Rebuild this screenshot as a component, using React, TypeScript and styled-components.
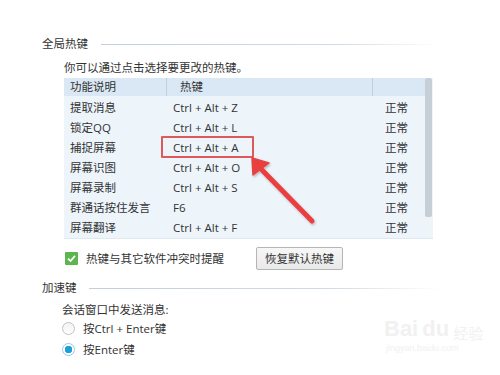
import React from "react";
import styled, { createGlobalStyle } from "styled-components";

const Global = createGlobalStyle`
  html, body { margin: 0; padding: 0; background: #fff; }
  body { font-family: "Open Sans", "Noto Sans CJK SC", sans-serif; color: #333; }
`;

const Page = styled.div`
  width: 500px;
  height: 375px;
  box-sizing: border-box;
  padding: 35px 0 0 42px;
  position: relative;
  overflow: hidden;
  font-size: 11.5px;
`;

const SectionHead = styled.div<{ $gap: number; $mt?: number }>`
  display: flex;
  align-items: center;
  gap: ${(p) => p.$gap}px;
  width: 398px;
  height: 18px;
  line-height: 18px;
  margin-top: ${(p) => p.$mt ?? 0}px;
`;

const SectionLine = styled.div`
  flex: 1;
  height: 1px;
  background: linear-gradient(to right, #c4ced8 0%, #d2dbe3 70%, rgba(255,255,255,0) 100%);
`;

const Indent = styled.div`
  padding-left: 22px;
`;

const Hint = styled.div`
  height: 16px;
  line-height: 16px;
  margin-top: 7px;
`;

const Table = styled.div`
  position: relative;
  width: 369px;
  margin-top: 2px;
  background: #edf5fb;
  display: grid;
  grid-template-columns: 102px 206px 53px 8px;
  grid-auto-rows: 20px;
  border-bottom: 1px solid #dde8f0;
`;

const HeadCell = styled.div<{ $sep?: boolean; $pad: number }>`
  height: 18px;
  line-height: 18px;
  background: #d9e8f4;
  padding-left: ${(p) => p.$pad}px;
  border-left: ${(p) => (p.$sep ? "1px solid #bdd0e0" : "none")};
  box-sizing: border-box;
  align-self: start;
`;

const Cell = styled.div<{ $pad: number }>`
  position: relative;
  line-height: 20px;
  padding-left: ${(p) => p.$pad}px;
  white-space: nowrap;
`;

const ScrollTrack = styled.div`
  grid-column: 4;
  grid-row: 1 / span 8;
  background: #eef4f8;
  position: relative;
`;

const ScrollThumb = styled.div`
  position: absolute;
  left: 0;
  right: 1px;
  top: 0;
  height: 139px;
  border-radius: 2px;
  background: #c6ced6;
`;

const Highlight = styled.div`
  position: absolute;
  left: -5px;
  top: -2px;
  width: 89px;
  height: 18px;
  border: 2px solid #de5a5a;
  border-radius: 1px;
`;

const ArrowSvg = styled.svg`
  position: absolute;
  left: 0;
  top: 0;
  pointer-events: none;
  overflow: visible;
`;

const OptionRow = styled.div`
  display: flex;
  align-items: center;
  margin-top: 7px;
  height: 24px;
`;

const Check = styled.div`
  width: 13px;
  height: 13px;
  margin-left: 1px;
  background: #5cb54f;
  border-radius: 1px;
  display: flex;
  align-items: center;
  justify-content: center;
`;

const CheckLabel = styled.span`
  margin-left: 8px;
  width: 170px;
`;

const Button = styled.button`
  font: inherit;
  font-size: 11.5px;
  color: #333;
  width: 87px;
  height: 23px;
  padding: 0;
  border: 1px solid #b5b5b5;
  border-radius: 2px;
  background: linear-gradient(#f7f7f7, #e9e9e9);
`;

const Sub = styled.div`
  height: 16px;
  line-height: 16px;
  margin-top: 5px;
  margin-left: -2px;
`;

const RadioRow = styled.div<{ $mt: number }>`
  display: flex;
  align-items: center;
  gap: 8px;
  margin-left: -2px;
  margin-top: ${(p) => p.$mt}px;
  height: 18px;
`;

const Radio = styled.div<{ $on?: boolean }>`
  width: 11px;
  height: 11px;
  border-radius: 50%;
  border: 1px solid ${(p) => (p.$on ? "#9cc9e4" : "#c2c2c2")};
  background: ${(p) => (p.$on ? "radial-gradient(circle, #1d9fd8 0 3.5px, #fff 4px)" : "linear-gradient(#f2f2f2, #fff)")};
`;

const Watermark = styled.div`
  position: absolute;
  left: 384px;
  top: 318px;
  color: #f1f1f1;
  font-family: "Liberation Sans", sans-serif;
  line-height: 1;
`;

const WmTop = styled.div`
  font-size: 22px;
  font-weight: bold;
  display: flex;
  align-items: flex-end;
  gap: 4px;
  span.cn { font-family: "Noto Sans CJK SC", sans-serif; font-size: 15px; font-weight: normal; }
`;

const WmBottom = styled.div`
  font-size: 9px;
  margin-top: 4px;
  margin-left: 2px;
`;

const rows: [string, string][] = [
  ["提取消息", "Ctrl + Alt + Z"],
  ["锁定QQ", "Ctrl + Alt + L"],
  ["捕捉屏幕", "Ctrl + Alt + A"],
  ["屏幕识图", "Ctrl + Alt + O"],
  ["屏幕录制", "Ctrl + Alt + S"],
  ["群通话按住发言", "F6"],
  ["屏幕翻译", "Ctrl + Alt + F"],
];

export default function App() {
  return (
    <Page>
      <Global />
      <SectionHead $gap={13}>
        <span>全局热键</span>
        <SectionLine />
      </SectionHead>
      <Indent>
        <Hint>你可以通过点击选择要更改的热键。</Hint>
        <Table>
          <HeadCell $pad={6}>功能说明</HeadCell>
          <HeadCell $pad={13} $sep>热键</HeadCell>
          <HeadCell $pad={0} $sep />
          <ScrollTrack>
            <ScrollThumb />
          </ScrollTrack>
          {rows.map(([name, key], i) => (
            <React.Fragment key={name}>
              <Cell $pad={6}>{name}</Cell>
              <Cell $pad={7}>
                {key}
                {i === 2 && <Highlight />}
              </Cell>
              <Cell $pad={13}>正常</Cell>
            </React.Fragment>
          ))}
          <ArrowSvg width="369" height="158">
            <defs>
              <filter id="sh" x="-20%" y="-20%" width="140%" height="140%">
                <feDropShadow dx="1" dy="1.5" stdDeviation="1" floodColor="#000" floodOpacity="0.25" />
              </filter>
            </defs>
            <g filter="url(#sh)" fill="#e8403f" stroke="#e8403f">
              <line x1="248" y1="143" x2="197" y2="91" strokeWidth="5" strokeLinecap="round" />
              <polygon points="188,80 189,97 205,85" strokeWidth="1.5" strokeLinejoin="round" />
            </g>
          </ArrowSvg>
        </Table>
        <OptionRow>
          <Check>
            <svg width="11" height="11" viewBox="0 0 11 11">
              <path d="M2 5.6 L4.5 8 L9 2.8" fill="none" stroke="#fff" strokeWidth="1.8" />
            </svg>
          </Check>
          <CheckLabel>热键与其它软件冲突时提醒</CheckLabel>
          <Button>恢复默认热键</Button>
        </OptionRow>
      </Indent>
      <SectionHead $gap={12} $mt={9}>
        <span>加速键</span>
        <SectionLine />
      </SectionHead>
      <Indent>
        <Sub>会话窗口中发送消息:</Sub>
        <RadioRow $mt={1}>
          <Radio />
          <span>按Ctrl + Enter键</span>
        </RadioRow>
        <RadioRow $mt={3}>
          <Radio $on />
          <span>按Enter键</span>
        </RadioRow>
      </Indent>
      <Watermark>
        <WmTop>
          <span>Bai</span>
          <span>du</span>
          <span className="cn">经验</span>
        </WmTop>
        <WmBottom>jingyan.baidu.com</WmBottom>
      </Watermark>
    </Page>
  );
}
